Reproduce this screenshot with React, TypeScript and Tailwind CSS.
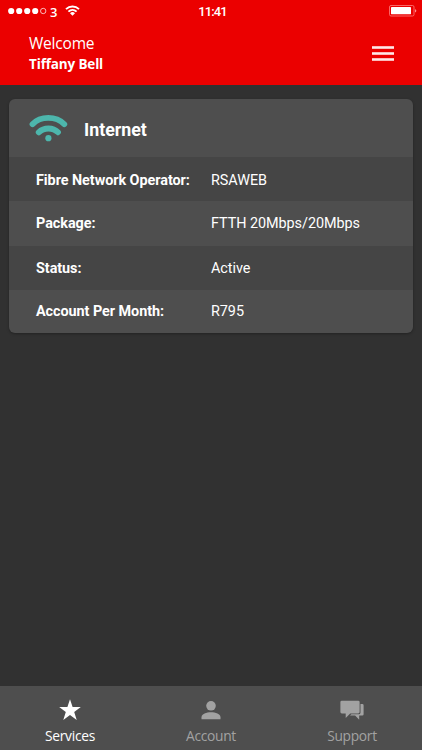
const details = [
  { label: 'Fibre Network Operator:', value: 'RSAWEB', row: 'h-11 bg-[#454545] pt-[3px]' },
  { label: 'Package:', value: 'FTTH 20Mbps/20Mbps', row: 'h-[45px]' },
  { label: 'Status:', value: 'Active', row: 'h-11 bg-[#454545] pt-[2px]' },
  { label: 'Account Per Month:', value: 'R795', row: 'h-[43px]' }
]

function StatusBar() {
  return (
    <div className="grid h-[22px] grid-cols-3 items-center pr-[5px] pl-2 text-white">
      <div className="flex items-center">
        <svg width="40" height="8" viewBox="0 0 40 8" fill="currentColor">
          <circle cx="3.2" cy="4" r="3.1" />
          <circle cx="11.2" cy="4" r="3.1" />
          <circle cx="19.2" cy="4" r="3.1" />
          <circle cx="27.2" cy="4" r="3.1" />
          <circle cx="35.2" cy="4" r="2.7" fill="none" stroke="currentColor" strokeWidth="0.7" />
        </svg>
        <span className="ml-[2px] w-3 pt-[2px] font-['Open_Sans',sans-serif] text-[13px] leading-none font-semibold">
          3
        </span>
        <svg
          className="mb-[2px] ml-[3px]"
          width="15"
          height="11"
          viewBox="0 0 15 11"
          fill="none"
          stroke="currentColor"
          strokeWidth="1.9"
        >
          <path d="M1 4.2C4.7 .5 10.3 .5 14 4.2" />
          <path d="M3.4 6.6C5.8 4.3 9.2 4.3 11.6 6.6" />
          <path d="M7.5 10.7L5 8.2Q7.5 6 10 8.2Z" fill="currentColor" stroke="none" />
        </svg>
      </div>
      <span className="pt-px text-center font-['Roboto',sans-serif] text-[13px] leading-none font-medium tracking-[-0.9px]">
        11:41
      </span>
      <svg className="justify-self-end" width="28" height="12" viewBox="0 0 28 12">
        <rect x="0.5" y="0.5" width="24.5" height="10.5" rx="1.5" fill="none" stroke="#ff8080" strokeWidth="0.8" />
        <rect x="2" y="2" width="20" height="7.2" rx="0.4" fill="#fff" />
        <path d="M26.2 4Q28.4 5.8 26.2 7.6Z" fill="#ffb0b0" />
      </svg>
    </div>
  )
}

function StarIcon() {
  return (
    <svg width="22" height="22" viewBox="0 0 22 22" fill="currentColor">
      <path d="M11 .2L13.6 8H21.8L15.2 12.9L17.7 21L11 16.1L4.3 21L6.8 12.9L.2 8H8.4Z" />
    </svg>
  )
}

function PersonIcon() {
  return (
    <svg width="20" height="22" viewBox="0 0 20 22" fill="currentColor">
      <circle cx="10" cy="6.8" r="4.8" />
      <path d="M.5 20.3V18.2C.5 15 5.5 13.2 10 13.2S19.5 15 19.5 18.2V20.3Z" />
    </svg>
  )
}

function ChatIcon() {
  return (
    <svg width="24" height="22" viewBox="0 0 24 22" fill="currentColor">
      <path d="M1.8 1.7H18.2Q19.6 1.7 19.6 3.1V13Q19.6 14.4 18.2 14.4H10.2L5.7 19V14.4H1.8Q.4 14.4 .4 13V3.1Q.4 1.7 1.8 1.7Z" />
      <path d="M20.5 5H22.3Q23.6 5 23.6 6.3V15.2Q23.6 16.6 22.3 16.6H19.2V20.7L15.1 16.6H10L11.3 15.3H18.6Q20.5 15.3 20.5 13.4Z" />
    </svg>
  )
}

const tabs = [
  { name: 'Services', icon: <StarIcon />, style: 'w-[138px] text-white' },
  { name: 'Account', icon: <PersonIcon />, style: 'w-[144px] text-[#a2a2a2]' },
  { name: 'Support', icon: <ChatIcon />, style: 'w-[138px] text-[#a2a2a2]' }
]

export default function App() {
  return (
    <div className="flex h-screen w-full flex-col overflow-hidden bg-[#313131] text-white">
      <header className="h-[85px] shrink-0 bg-[#eb0000] font-['Open_Sans',sans-serif]">
        <StatusBar />
        <div className="flex items-start justify-between pt-[11px] pr-7 pl-[29px]">
          <div>
            <p className="text-[15.5px] leading-5 tracking-[-0.2px]">Welcome</p>
            <p className="mt-px text-[13.5px] leading-5 font-bold tracking-[-0.15px]">Tiffany Bell</p>
          </div>
          <button aria-label="Menu" className="mt-[13px]">
            <svg width="22" height="16" viewBox="0 0 22 16" fill="#ffe8e8">
              <rect y="0.2" width="22" height="2.6" />
              <rect y="6.2" width="22" height="2.6" />
              <rect y="12.2" width="22" height="2.6" />
            </svg>
          </button>
        </div>
      </header>

      <main className="flex-1 px-[9px] pt-3.5 font-['Roboto',sans-serif]">
        <section className="overflow-hidden rounded-md bg-[#4e4e4e] shadow-[0_1px_3px_rgba(0,0,0,0.3)]">
          <div className="flex h-[58px] items-center pl-5">
            <svg
              width="39"
              height="30"
              viewBox="0 0 39 30"
              fill="none"
              stroke="#4db6ac"
              strokeWidth="5.8"
              strokeLinecap="round"
            >
              <path d="M3.5 11.2C11.5 2.8 27 2.8 35.3 11.2" />
              <path d="M9.7 19.3C15 14.2 24 14.2 29 19.3" />
              <circle cx="19.4" cy="25.2" r="3.1" fill="#4db6ac" stroke="none" />
            </svg>
            <h1 className="ml-4 pt-[3px] text-[17.8px] leading-6 font-bold">Internet</h1>
          </div>
          {details.map((item) => (
            <div key={item.label} className={`flex items-center pl-[27px] text-[14.4px] leading-5 tracking-[-0.05px] ${item.row}`}>
              <span className="w-[175px] font-bold">{item.label}</span>
              <span>{item.value}</span>
            </div>
          ))}
        </section>
      </main>

      <nav className="flex h-16 shrink-0 bg-[#4e4e4e] pl-px font-['Open_Sans',sans-serif]">
        {tabs.map((tab) => (
          <button key={tab.name} className={`flex flex-col items-center pt-[13px] ${tab.style}`}>
            {tab.icon}
            <span className="mt-[5px] text-[13.8px] leading-5 tracking-[-0.3px]">{tab.name}</span>
          </button>
        ))}
      </nav>
    </div>
  )
}
